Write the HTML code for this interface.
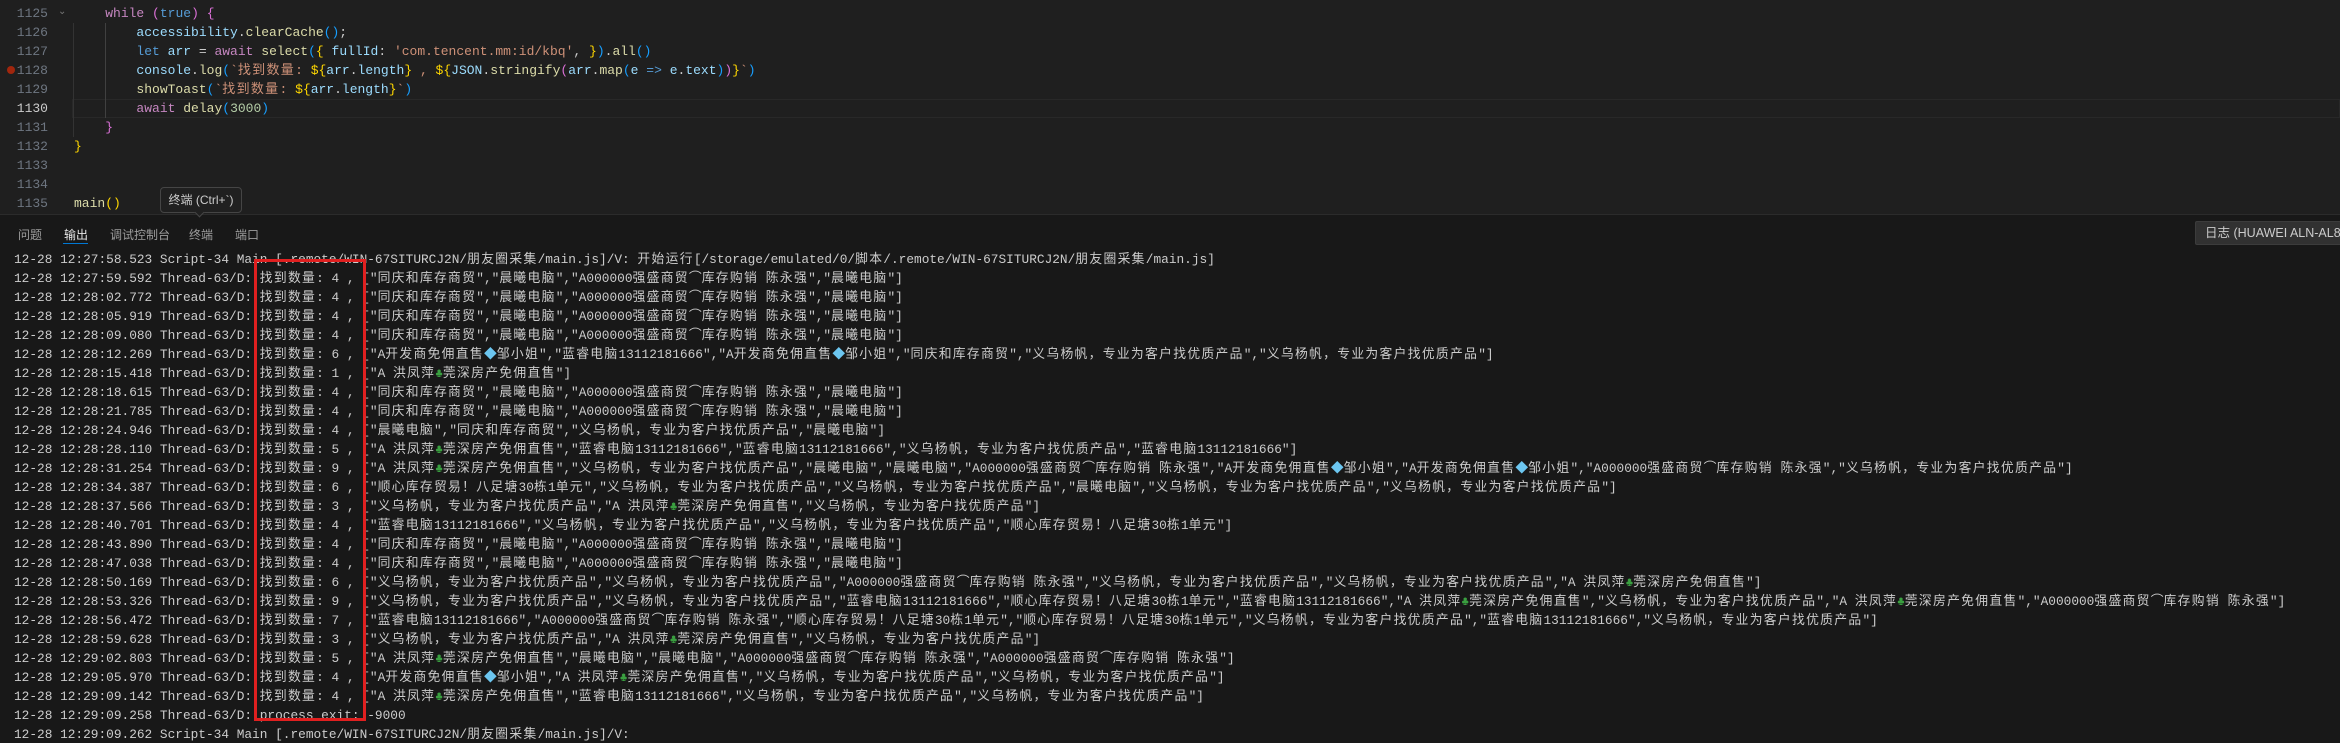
<!DOCTYPE html>
<html><head><meta charset="utf-8"><style>
body{margin:0;width:2340px;height:742px;background:#1f1f1f;overflow:hidden;position:relative;font-family:"Liberation Mono","Noto Sans CJK SC",monospace;}
.ed{position:absolute;left:0;top:0;width:2340px;height:214px;background:#1f1f1f;}
.ln{position:absolute;left:0;width:48px;text-align:right;color:#6e7681;font-size:13px;line-height:19px;white-space:pre;}
.cd{position:absolute;left:74px;font-size:13px;line-height:19px;white-space:pre;color:#cccccc;}
.k{color:#c586c0}.b{color:#569cd6}.f{color:#dcdcaa}.v{color:#9cdcfe}.s{color:#ce9178}.n{color:#b5cea8}.y{color:#ffd700}.p{color:#da70d6}.bl{color:#179fff}.w{color:#d4d4d4}
.panel{position:absolute;left:0;top:214px;width:2340px;height:528px;background:#181818;border-top:1px solid #2b2b2b;}
.tab{position:absolute;top:226px;font-family:"Liberation Sans","Noto Sans CJK SC",sans-serif;font-size:12px;color:#9d9d9d;}
.out{position:absolute;left:14px;top:250px;width:2326px;height:492px;overflow:hidden;font-size:12.8px;line-height:19px;white-space:pre;color:#cccccc;}
.c{color:#3aa040}.d{color:#6cc6f0}
.z{letter-spacing:1.3px}
</style></head><body>
<div class="ed"></div>
<div style="position:absolute;left:7px;top:66px;width:8px;height:8px;border-radius:50%;background:#a1260d"></div>
<div style="position:absolute;left:72px;top:99px;width:2266px;height:17px;border:1px solid #282828"></div>
<div style="position:absolute;left:105px;top:23px;width:1px;height:95px;background:#404040"></div>
<div style="position:absolute;left:73px;top:23px;width:1px;height:114px;background:#333"></div>
<div class="ln" style="top:-15px">1124
1125
1126
1127
1128
1129
<span style="color:#ccc">1130</span>
1131
1132
1133
1134
1135</div>
<div style="position:absolute;left:58px;top:6px;color:#777;font-size:10px;font-family:'DejaVu Sans'">⌄</div>
<div class="cd" style="top:4px">    <span class="k">while</span> <span class="p">(</span><span class="b">true</span><span class="p">)</span> <span class="p">{</span>
        <span class="v">accessibility</span>.<span class="f">clearCache</span><span class="bl">()</span>;
        <span class="b">let</span> <span class="v">arr</span> = <span class="k">await</span> <span class="f">select</span><span class="bl">(</span><span class="y">{</span> <span class="v">fullId</span>: <span class="s">'com.tencent.mm:id/kbq'</span>, <span class="y">}</span><span class="bl">)</span>.<span class="f">all</span><span class="bl">()</span>
        <span class="v">console</span>.<span class="f">log</span><span class="bl">(</span><span class="s">`<span class="z">找到数量</span>: </span><span class="y">${</span><span class="v">arr</span>.<span class="v">length</span><span class="y">}</span><span class="s"> , </span><span class="y">${</span><span class="v">JSON</span>.<span class="f">stringify</span><span class="p">(</span><span class="v">arr</span>.<span class="f">map</span><span class="bl">(</span><span class="v">e</span> <span class="b">=&gt;</span> <span class="v">e</span>.<span class="v">text</span><span class="bl">)</span><span class="p">)</span><span class="y">}</span><span class="s">`</span><span class="bl">)</span>
        <span class="f">showToast</span><span class="bl">(</span><span class="s">`<span class="z">找到数量</span>: </span><span class="y">${</span><span class="v">arr</span>.<span class="v">length</span><span class="y">}</span><span class="s">`</span><span class="bl">)</span>
        <span class="k">await</span> <span class="f">delay</span><span class="bl">(</span><span class="n">3000</span><span class="bl">)</span>
    <span class="p">}</span>
<span class="y">}</span>


<span class="f">main</span><span class="y">()</span></div>
<div class="panel"></div>
<div style="position:absolute;left:160px;top:187px;width:80px;height:24px;background:#202020;border:1px solid #454545;border-radius:4px;color:#ccc;font-family:'Liberation Sans','Noto Sans CJK SC',sans-serif;font-size:12px;line-height:24px;text-align:center;">终端 (Ctrl+`)</div>
<div style="position:absolute;left:196px;top:209px;width:6px;height:6px;background:#202020;border-right:1px solid #454545;border-bottom:1px solid #454545;transform:rotate(45deg)"></div>
<div class="tab" style="left:18px">问题</div>
<div class="tab" style="left:64px;color:#e7e7e7">输出</div>
<div style="position:absolute;left:63px;top:243px;width:25px;height:1px;background:#0078d4"></div>
<div class="tab" style="left:110px">调试控制台</div>
<div class="tab" style="left:189px">终端</div>
<div class="tab" style="left:235px">端口</div>
<div style="position:absolute;left:2195px;top:221px;width:135px;height:22px;overflow:hidden;background:#313131;border:1px solid #3c3c3c;border-right:none;border-radius:2px 0 0 2px;color:#ccc;font-family:'Liberation Sans','Noto Sans CJK SC',sans-serif;font-size:12.5px;line-height:22px;padding-left:9px;white-space:nowrap;">日志 (HUAWEI ALN-AL80)</div>
<div class="out" id="out">12-28 12:27:58.523 Script-34 Main [.remote/WIN-67SITURCJ2N/朋友圈采集/main.js]/V: 开始运行[/storage/emulated/0/脚本/.remote/WIN-67SITURCJ2N/朋友圈采集/main.js]
12-28 12:27:59.592 Thread-63/D: 找到数量: 4 , ["同庆和库存商贸","晨曦电脑","A000000强盛商贸⌒库存购销 陈永强","晨曦电脑"]
12-28 12:28:02.772 Thread-63/D: 找到数量: 4 , ["同庆和库存商贸","晨曦电脑","A000000强盛商贸⌒库存购销 陈永强","晨曦电脑"]
12-28 12:28:05.919 Thread-63/D: 找到数量: 4 , ["同庆和库存商贸","晨曦电脑","A000000强盛商贸⌒库存购销 陈永强","晨曦电脑"]
12-28 12:28:09.080 Thread-63/D: 找到数量: 4 , ["同庆和库存商贸","晨曦电脑","A000000强盛商贸⌒库存购销 陈永强","晨曦电脑"]
12-28 12:28:12.269 Thread-63/D: 找到数量: 6 , ["A开发商免佣直售<span class="d">◆</span>邹小姐","蓝睿电脑13112181666","A开发商免佣直售<span class="d">◆</span>邹小姐","同庆和库存商贸","义乌杨帆，专业为客户找优质产品","义乌杨帆，专业为客户找优质产品"]
12-28 12:28:15.418 Thread-63/D: 找到数量: 1 , ["A 洪凤萍<span class="c">♣</span>莞深房产免佣直售"]
12-28 12:28:18.615 Thread-63/D: 找到数量: 4 , ["同庆和库存商贸","晨曦电脑","A000000强盛商贸⌒库存购销 陈永强","晨曦电脑"]
12-28 12:28:21.785 Thread-63/D: 找到数量: 4 , ["同庆和库存商贸","晨曦电脑","A000000强盛商贸⌒库存购销 陈永强","晨曦电脑"]
12-28 12:28:24.946 Thread-63/D: 找到数量: 4 , ["晨曦电脑","同庆和库存商贸","义乌杨帆，专业为客户找优质产品","晨曦电脑"]
12-28 12:28:28.110 Thread-63/D: 找到数量: 5 , ["A 洪凤萍<span class="c">♣</span>莞深房产免佣直售","蓝睿电脑13112181666","蓝睿电脑13112181666","义乌杨帆，专业为客户找优质产品","蓝睿电脑13112181666"]
12-28 12:28:31.254 Thread-63/D: 找到数量: 9 , ["A 洪凤萍<span class="c">♣</span>莞深房产免佣直售","义乌杨帆，专业为客户找优质产品","晨曦电脑","晨曦电脑","A000000强盛商贸⌒库存购销 陈永强","A开发商免佣直售<span class="d">◆</span>邹小姐","A开发商免佣直售<span class="d">◆</span>邹小姐","A000000强盛商贸⌒库存购销 陈永强","义乌杨帆，专业为客户找优质产品"]
12-28 12:28:34.387 Thread-63/D: 找到数量: 6 , ["顺心库存贸易！八足塘30栋1单元","义乌杨帆，专业为客户找优质产品","义乌杨帆，专业为客户找优质产品","晨曦电脑","义乌杨帆，专业为客户找优质产品","义乌杨帆，专业为客户找优质产品"]
12-28 12:28:37.566 Thread-63/D: 找到数量: 3 , ["义乌杨帆，专业为客户找优质产品","A 洪凤萍<span class="c">♣</span>莞深房产免佣直售","义乌杨帆，专业为客户找优质产品"]
12-28 12:28:40.701 Thread-63/D: 找到数量: 4 , ["蓝睿电脑13112181666","义乌杨帆，专业为客户找优质产品","义乌杨帆，专业为客户找优质产品","顺心库存贸易！八足塘30栋1单元"]
12-28 12:28:43.890 Thread-63/D: 找到数量: 4 , ["同庆和库存商贸","晨曦电脑","A000000强盛商贸⌒库存购销 陈永强","晨曦电脑"]
12-28 12:28:47.038 Thread-63/D: 找到数量: 4 , ["同庆和库存商贸","晨曦电脑","A000000强盛商贸⌒库存购销 陈永强","晨曦电脑"]
12-28 12:28:50.169 Thread-63/D: 找到数量: 6 , ["义乌杨帆，专业为客户找优质产品","义乌杨帆，专业为客户找优质产品","A000000强盛商贸⌒库存购销 陈永强","义乌杨帆，专业为客户找优质产品","义乌杨帆，专业为客户找优质产品","A 洪凤萍<span class="c">♣</span>莞深房产免佣直售"]
12-28 12:28:53.326 Thread-63/D: 找到数量: 9 , ["义乌杨帆，专业为客户找优质产品","义乌杨帆，专业为客户找优质产品","蓝睿电脑13112181666","顺心库存贸易！八足塘30栋1单元","蓝睿电脑13112181666","A 洪凤萍<span class="c">♣</span>莞深房产免佣直售","义乌杨帆，专业为客户找优质产品","A 洪凤萍<span class="c">♣</span>莞深房产免佣直售","A000000强盛商贸⌒库存购销 陈永强"]
12-28 12:28:56.472 Thread-63/D: 找到数量: 7 , ["蓝睿电脑13112181666","A000000强盛商贸⌒库存购销 陈永强","顺心库存贸易！八足塘30栋1单元","顺心库存贸易！八足塘30栋1单元","义乌杨帆，专业为客户找优质产品","蓝睿电脑13112181666","义乌杨帆，专业为客户找优质产品"]
12-28 12:28:59.628 Thread-63/D: 找到数量: 3 , ["义乌杨帆，专业为客户找优质产品","A 洪凤萍<span class="c">♣</span>莞深房产免佣直售","义乌杨帆，专业为客户找优质产品"]
12-28 12:29:02.803 Thread-63/D: 找到数量: 5 , ["A 洪凤萍<span class="c">♣</span>莞深房产免佣直售","晨曦电脑","晨曦电脑","A000000强盛商贸⌒库存购销 陈永强","A000000强盛商贸⌒库存购销 陈永强"]
12-28 12:29:05.970 Thread-63/D: 找到数量: 4 , ["A开发商免佣直售<span class="d">◆</span>邹小姐","A 洪凤萍<span class="c">♣</span>莞深房产免佣直售","义乌杨帆，专业为客户找优质产品","义乌杨帆，专业为客户找优质产品"]
12-28 12:29:09.142 Thread-63/D: 找到数量: 4 , ["A 洪凤萍<span class="c">♣</span>莞深房产免佣直售","蓝睿电脑13112181666","义乌杨帆，专业为客户找优质产品","义乌杨帆，专业为客户找优质产品"]
12-28 12:29:09.258 Thread-63/D: process exit: -9000
12-28 12:29:09.262 Script-34 Main [.remote/WIN-67SITURCJ2N/朋友圈采集/main.js]/V:</div>
<div style="position:absolute;left:254px;top:259px;width:106px;height:456px;border:3px solid #e02020;"></div>
<script>
(function(){
var el=document.getElementById('out');
var w=document.createTreeWalker(el,NodeFilter.SHOW_TEXT,null,false),nodes=[],n;
while(n=w.nextNode())nodes.push(n);
var re=/([\u3000-\u9fff\uff00-\uffef]+)/;
nodes.forEach(function(t){
 var parts=t.nodeValue.split(re);if(parts.length<2)return;
 var f=document.createDocumentFragment();
 parts.forEach(function(p,i){
  if(!p)return;
  if(i%2){var s=document.createElement('span');s.className='z';s.textContent=p;f.appendChild(s);}
  else f.appendChild(document.createTextNode(p));
 });
 t.parentNode.replaceChild(f,t);
});
})();
</script>
</body></html>
